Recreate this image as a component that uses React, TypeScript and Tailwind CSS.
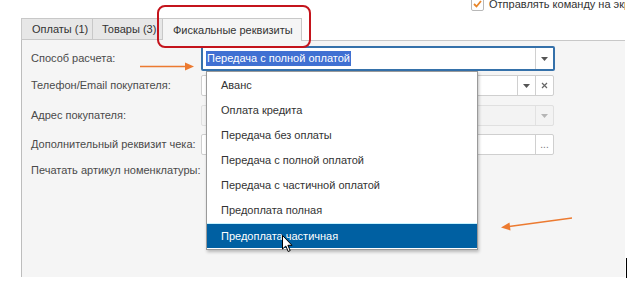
import { ReactNode } from 'react'

// Поля формы "Фискальные реквизиты"
const items = [
  'Аванс',
  'Оплата кредита',
  'Передача без оплаты',
  'Передача с полной оплатой',
  'Передача с частичной оплатой',
  'Предоплата полная',
  'Предоплата частичная',
]

function Caret({ light }: { light?: boolean }) {
  return (
    <svg width="7" height="4" viewBox="0 0 7 4">
      <path d="M0 0 L7 0 L3.5 4 Z" fill={light ? '#b5b5b5' : '#555'} />
    </svg>
  )
}

function Btn({ children, light }: { children: ReactNode; light?: boolean }) {
  return (
    <div className={`flex h-full w-[18px] items-center justify-center border-l ${light ? 'border-[#e2e2e2]' : 'border-[#d0d0d0]'}`}>
      {children}
    </div>
  )
}

function Row({ label, mt, h, children }: { label: string; mt: string; h: string; children?: ReactNode }) {
  return (
    <div className={`flex items-center ${mt} ${h}`}>
      <div className="w-[170px] shrink-0 whitespace-nowrap text-[11px] text-[#4a4a4a]">{label}</div>
      {children}
    </div>
  )
}

export default function App() {
  return (
    <div className="relative h-[289px] w-[642px] overflow-hidden bg-white [font-family:'Liberation_Sans',Arial,sans-serif]">
      {/* чекбокс сверху, обрезан краем */}
      <div className="flex h-[18px] w-[625px] overflow-hidden pl-[471px]">
        <div className="-mt-[3px] flex h-[14px] items-center gap-[5px] whitespace-nowrap">
          <div className="flex h-[13px] w-[13px] shrink-0 items-center justify-center rounded-[2px] border border-[#b8b8b8] bg-white">
            <svg width="9" height="8" viewBox="0 0 9 8">
              <path d="M1 4 L3.5 6.5 L8 1" stroke="#e8862a" strokeWidth="1.8" fill="none" />
            </svg>
          </div>
          <span className="text-[11px] text-[#333]">Отправлять команду на экран покупателя</span>
        </div>
      </div>

      {/* вкладки */}
      <div className="ml-[21px] flex h-[22px] whitespace-nowrap text-[11px] text-[#333]">
        <div className="flex w-[72px] items-center border border-[#c8c8c8] bg-[#e7e7e7] pl-[10px]">Оплаты (1)</div>
        <div className="flex w-[70px] items-center border border-l-0 border-[#c8c8c8] bg-[#e7e7e7] pl-[9px]">Товары (3)</div>
        <div className="relative z-10 flex h-[23px] w-[139px] items-center border border-b-0 border-l-0 border-[#c8c8c8] bg-[#f5f5f5] pl-[10px]">
          Фискальные реквизиты
        </div>
      </div>

      {/* панель */}
      <div className="ml-[21px] h-[237px] w-[604px] border-l border-[#bdbdbd] bg-[#f5f5f5] pl-[9px]">
        <div className="flex flex-col">
          <Row label="Способ расчета:" mt="mt-[6px]" h="h-[25px]">
            <div className="relative flex h-[25px] w-[354px] items-center rounded-[2px] border-2 border-[#3571aa] bg-white">
              <div className="flex flex-1 items-center pl-[3px]">
                <span className="bg-[#4070d2] px-[1px] text-[11px] leading-[15px] text-white">Передача с полной оплатой</span>
              </div>
              <Btn><Caret /></Btn>

              {/* выпадающий список */}
              <div className="absolute left-[3px] top-[23px] z-20 w-[272px] border border-[#9a9a9a] bg-white py-px shadow-[1px_2px_3px_rgba(0,0,0,0.25)]">
                {items.map((it, i) =>
                  i === items.length - 1 ? (
                    <div key={it} className="flex h-[25px] items-center border-t border-[#c8f4ff] bg-[#0060a2] pl-[14px] text-[11px] text-white">
                      {it}
                    </div>
                  ) : (
                    <div key={it} className="flex h-[25px] items-center pl-[14px] text-[11px] text-[#333]">
                      {it}
                    </div>
                  )
                )}
              </div>
            </div>
          </Row>

          <Row label="Телефон/Email покупателя:" mt="mt-[4px]" h="h-[21px]">
            <div className="flex h-[21px] w-[353px] items-center rounded-[2px] border border-[#cfcfcf] bg-white">
              <div className="flex-1" />
              <Btn><Caret /></Btn>
              <Btn>
                <svg width="7" height="7" viewBox="0 0 7 7">
                  <path d="M1 1 L6 6 M6 1 L1 6" stroke="#666" strokeWidth="1.2" />
                </svg>
              </Btn>
            </div>
          </Row>

          <Row label="Адрес покупателя:" mt="mt-[9px]" h="h-[21px]">
            <div className="flex h-[21px] w-[353px] items-center rounded-[2px] border border-[#e0e0e0] bg-[#f3f3f3]">
              <div className="flex-1" />
              <Btn light><Caret light /></Btn>
            </div>
          </Row>

          <Row label="Дополнительный реквизит чека:" mt="mt-[8px]" h="h-[21px]">
            <div className="flex h-[21px] w-[353px] items-center rounded-[2px] border border-[#cfcfcf] bg-white">
              <div className="flex-1" />
              <Btn>
                <span className="text-[10px] leading-none text-[#777]">...</span>
              </Btn>
            </div>
          </Row>

          <Row label="Печатать артикул номенклатуры:" mt="mt-[5px]" h="h-[20px]" />
        </div>
      </div>

      {/* граница панели справа от активной вкладки */}
      <div className="absolute left-[302px] top-[40px] h-px w-[323px] bg-[#c8c8c8]" />

      {/* красная рамка вокруг вкладки */}
      <div className="absolute left-[157px] top-[5px] h-[43px] w-[154px] rounded-[8px] border-2 border-[#c4141c]" />

      {/* оранжевые стрелки */}
      <svg className="pointer-events-none absolute left-0 top-0 z-30" width="642" height="289">
        <line x1="140" y1="66.5" x2="187" y2="66.5" stroke="#ec7a30" strokeWidth="1.3" />
        <path d="M194 66.5 L185 62.5 L185 70.5 Z" fill="#ec7a30" />
        <line x1="572" y1="218" x2="509" y2="226.5" stroke="#ec7a30" strokeWidth="1.3" />
        <path d="M501 227.5 L509.5 222.5 L510.5 230.5 Z" fill="#ec7a30" />
      </svg>

      {/* курсор мыши */}
      <svg className="pointer-events-none absolute left-[282px] top-[235px] z-30" width="12" height="18" viewBox="0 0 12 18">
        <path d="M0.5 0.5 L0.5 14 L3.8 11 L6.2 16.5 L8.2 15.6 L5.9 10.3 L10 10.3 Z" fill="white" stroke="black" strokeWidth="1" />
      </svg>

      {/* текстовый курсор */}
      <div className="absolute left-[626px] top-[258px] h-[20px] w-px bg-black" />
    </div>
  )
}
